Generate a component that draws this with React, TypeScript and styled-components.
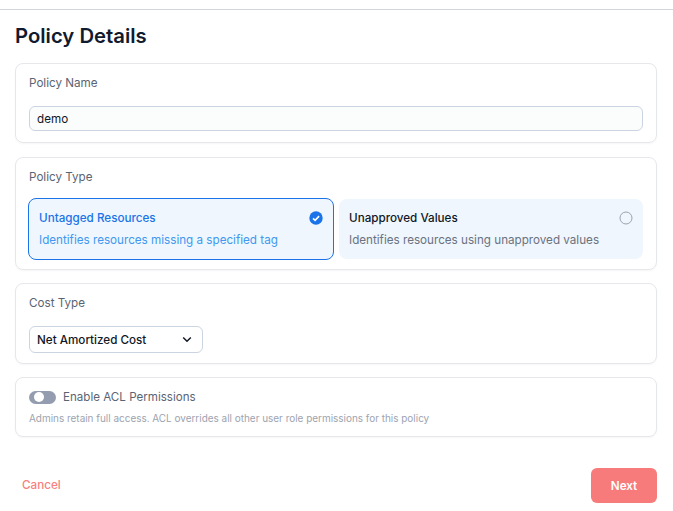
import styled, { createGlobalStyle } from "styled-components";

const GlobalStyle = createGlobalStyle`
  html, body {
    margin: 0;
    padding: 0;
    background: #fff;
    font-family: Inter, "Liberation Sans", sans-serif;
  }
  * { box-sizing: border-box; }
`;

const Page = styled.div`
  width: 673px;
  height: 511px;
  overflow: hidden;
  padding-top: 9px;
`;

const Content = styled.div`
  border-top: 1px solid #d1d5db;
  padding: 14px 16px 0 15px;
`;

const Title = styled.h1`
  margin: 0 0 15px;
  font-size: 20.3px;
  line-height: 24px;
  font-weight: 600;
  color: #111a2e;
`;

const Card = styled.section<{ $height: number; $gap: number }>`
  border: 1px solid #e5e7eb;
  border-radius: 8px;
  padding: 11px 13px 0;
  margin-bottom: ${({ $gap }) => $gap}px;
  box-shadow: 0 1px 2px rgba(0, 0, 0, 0.04);
  height: ${({ $height }) => $height}px;
`;

const Label = styled.div<{ $gap?: number }>`
  font-size: 11.67px;
  line-height: 16px;
  color: #5b6472;
  margin-bottom: ${({ $gap }) => $gap ?? 15}px;
`;

const NameInput = styled.div`
  height: 25px;
  border: 1px solid #cbd5e1;
  border-radius: 6px;
  background: #fbfdfd;
  padding: 0 7px;
  font-size: 11.67px;
  line-height: 24px;
  color: #111827;
`;

const Options = styled.div`
  display: grid;
  grid-template-columns: 306px 304px;
  gap: 5px;
  margin-left: -1px;
`;

const Option = styled.div<{ $selected?: boolean }>`
  height: ${({ $selected }) => ($selected ? 62 : 60)}px;
  margin-top: ${({ $selected }) => ($selected ? 0 : 1)}px;
  border: ${({ $selected }) => ($selected ? "1px solid #1a73e8" : "none")};
  border-radius: 8px;
  background: #eff6fd;
  padding: 11px 10px;
  position: relative;
`;

const OptionTitle = styled.div<{ $selected?: boolean }>`
  font-size: 11.67px;
  line-height: 16px;
  font-weight: 500;
  color: ${({ $selected }) => ($selected ? "#1a73e8" : "#111827")};
  margin-bottom: 6px;
`;

const OptionText = styled.div<{ $selected?: boolean }>`
  font-size: 11.67px;
  line-height: 16px;
  color: ${({ $selected }) => ($selected ? "#4098f0" : "#6b7280")};
`;

const Marker = styled.span`
  position: absolute;
  top: 12px;
  right: 10px;
  display: flex;
`;

const CostSelect = styled.div`
  width: 174px;
  height: 27px;
  border: 1px solid #cbd5e1;
  border-radius: 6px;
  padding: 0 10px 0 7px;
  display: flex;
  align-items: center;
  justify-content: space-between;
  font-size: 11.67px;
  font-weight: 500;
  color: #111827;
`;

const ToggleRow = styled.div`
  display: flex;
  align-items: center;
  gap: 7px;
  margin-bottom: 6px;
`;

const Toggle = styled.span`
  width: 27px;
  height: 13px;
  border-radius: 7px;
  background: #949db0;
  padding: 1.5px 0 0 5px;
  display: block;
`;

const Knob = styled.span`
  display: block;
  width: 10px;
  height: 10px;
  border-radius: 50%;
  background: #fff;
`;

const ToggleLabel = styled.span`
  font-size: 11.6px;
  line-height: 16px;
  color: #5b6472;
`;

const Hint = styled.div`
  font-size: 9.95px;
  line-height: 14px;
  color: #9ca3af;
`;

const Footer = styled.div`
  display: flex;
  justify-content: space-between;
  align-items: center;
  margin-top: 31px;
`;

const CancelButton = styled.button`
  border: none;
  background: none;
  padding: 0 7px 1px;
  font: 500 11.67px Inter, "Liberation Sans", sans-serif;
  color: #f98080;
`;

const NextButton = styled.button`
  width: 66px;
  height: 35px;
  border: none;
  border-radius: 6px;
  background: #f87b7b;
  font: 600 11.67px Inter, "Liberation Sans", sans-serif;
  color: #fff;
`;

const CheckedIcon = () => (
  <svg width="14" height="14" viewBox="0 0 14 14">
    <circle cx="7" cy="7" r="6.7" fill="#1a73e8" />
    <path d="M4 7.3l2.1 2 4-4.2" fill="none" stroke="#fff" strokeWidth="1.6" />
  </svg>
);

const EmptyIcon = () => (
  <svg width="14" height="14" viewBox="0 0 14 14">
    <circle cx="7" cy="7" r="6" fill="none" stroke="#9ca3af" />
  </svg>
);

const ChevronIcon = () => (
  <svg width="10" height="7" viewBox="0 0 10 7">
    <path d="M1.2 1.5L5 5.2l3.8-3.7" fill="none" stroke="#111827" strokeWidth="1.5" />
  </svg>
);

const App = () => {
  return (
    <Page>
      <GlobalStyle />
      <Content>
        <Title>Policy Details</Title>
        <Card $height={80} $gap={14}>
          <Label>Policy Name</Label>
          <NameInput>demo</NameInput>
        </Card>
        <Card $height={113} $gap={13}>
          <Label $gap={13}>Policy Type</Label>
          <Options>
            <Option $selected>
              <OptionTitle $selected>Untagged Resources</OptionTitle>
              <OptionText $selected>Identifies resources missing a specified tag</OptionText>
              <Marker><CheckedIcon /></Marker>
            </Option>
            <Option>
              <OptionTitle>Unapproved Values</OptionTitle>
              <OptionText>Identifies resources using unapproved values</OptionText>
              <Marker><EmptyIcon /></Marker>
            </Option>
          </Options>
        </Card>
        <Card $height={81} $gap={13}>
          <Label>Cost Type</Label>
          <CostSelect>
            Net Amortized Cost
            <ChevronIcon />
          </CostSelect>
        </Card>
        <Card $height={60} $gap={14}>
          <ToggleRow>
            <Toggle><Knob /></Toggle>
            <ToggleLabel>Enable ACL Permissions</ToggleLabel>
          </ToggleRow>
          <Hint>Admins retain full access. ACL overrides all other user role permissions for this policy</Hint>
        </Card>
        <Footer>
          <CancelButton>Cancel</CancelButton>
          <NextButton>Next</NextButton>
        </Footer>
      </Content>
    </Page>
  );
};

export default App;
